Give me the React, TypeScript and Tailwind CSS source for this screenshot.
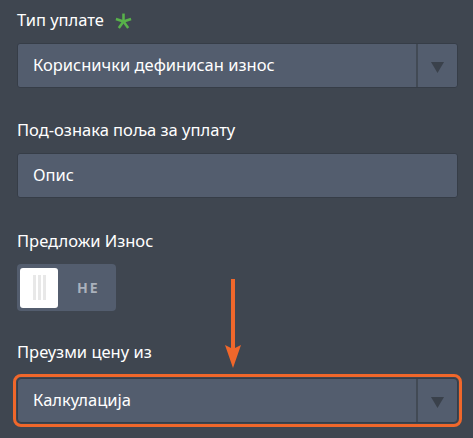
function Caret() {
  return (
    <div className="flex w-[41px] items-center justify-center border-l-2 border-[#424a55] pt-[3px]">
      <svg width="13" height="11" viewBox="0 0 13 11">
        <path d="M0 0 H13 L6.5 11 Z" fill="#3a414b" />
      </svg>
    </div>
  );
}

function Select({ value, highlight }: { value: string; highlight?: boolean }) {
  return (
    <div
      className={`flex h-[45px] rounded-[3px] border border-[#363d47] bg-[#535d6e] ${
        highlight ? 'outline-[3px] outline-solid outline-[#f0672b] outline-offset-[1px] rounded-[4px]' : ''
      }`}
    >
      <div className="flex flex-1 items-center pl-[15px] text-[16.5px] text-white">{value}</div>
      <Caret />
    </div>
  );
}

function Star() {
  return (
    <svg width="17" height="17" viewBox="-8 -8 16 16" className="ml-[11px] mt-[2px]">
      {[0, 72, 144, 216, 288].map((a) => (
        <line key={a} x1="0" y1="0" x2="0" y2="-7.5" stroke="#58b24a" strokeWidth="2.4" transform={`rotate(${a})`} />
      ))}
    </svg>
  );
}

export default function App() {
  return (
    <div
      className="relative min-h-screen w-full bg-[#3f4650] px-[17px] pt-[8px] pb-[10px]"
      style={{ fontFamily: '"Noto Sans", "Open Sans", sans-serif' }}
    >
      {/* Тип уплате */}
      <div className="flex h-6 items-center text-[16.5px] leading-6 text-white">
        Тип уплате
        <Star />
      </div>
      <div className="mt-[11px] mr-[-2px]">
        <Select value="Кориснички дефинисан износ" />
      </div>

      {/* Под-ознака */}
      <div className="mt-[30px] h-6 text-[16.5px] leading-6 text-white">Под-ознака поља за уплату</div>
      <div className="mt-[11px] mr-[-2px] flex h-[45px] items-center rounded-[3px] border border-[#363d47] bg-[#535d6e] pl-[15px] text-[16.5px] text-white">
        Опис
      </div>

      {/* Предложи Износ */}
      <div className="mt-[31px] h-6 text-[16.5px] leading-6 text-white">Предложи Износ</div>
      <div className="mt-[11px] flex h-[47px] w-[99px] items-center rounded-[4px] bg-[#535d6e] pl-[3px]">
        <div className="flex h-[40px] w-[38px] items-center justify-center gap-[2px] rounded-[3px] bg-white">
          <span className="h-[25px] w-[3px] bg-[#e8e8e8]" />
          <span className="h-[25px] w-[3px] bg-[#e8e8e8]" />
          <span className="h-[25px] w-[3px] bg-[#e8e8e8]" />
        </div>
        <span className="ml-[19px] text-[14px] font-bold tracking-[2px] text-[#aab1bc]">НЕ</span>
      </div>

      {/* Преузми цену из */}
      <div className="mt-[29px] h-6 text-[16.5px] leading-6 text-white">Преузми цену из</div>
      <div className="mt-[14px] mr-[-2px]">
        <Select value="Калкулација" highlight />
      </div>

      {/* arrow */}
      <svg className="absolute left-[225px] top-[279px]" width="16" height="90" viewBox="0 0 16 90">
        <rect x="6" y="0" width="4" height="70" fill="#f0672b" />
        <path d="M0 66 L8 70 L16 66 L8 89 Z" fill="#f0672b" />
      </svg>
    </div>
  );
}
